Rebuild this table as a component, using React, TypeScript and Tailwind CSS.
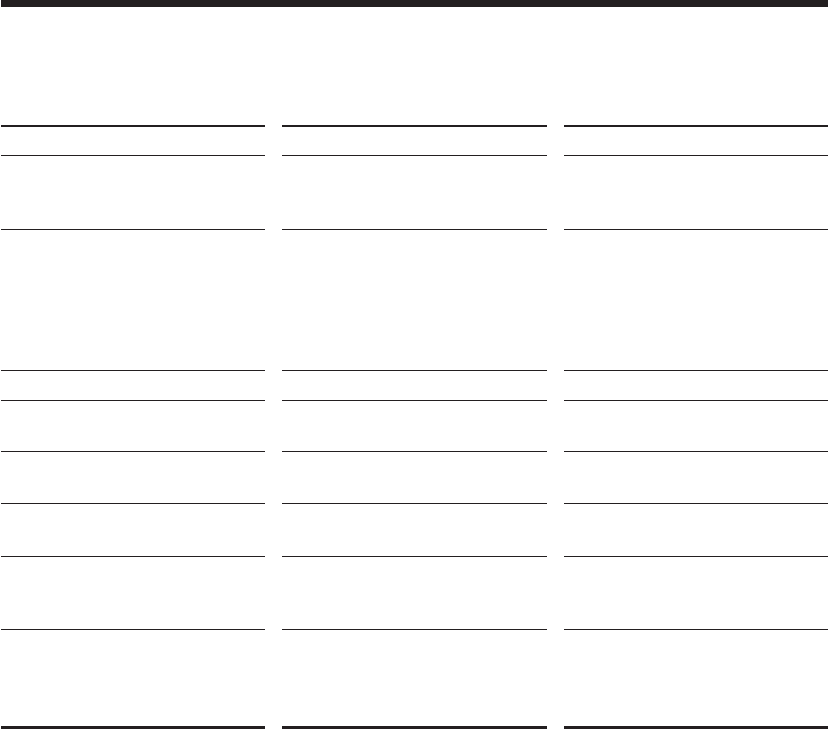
import React from "react";

// Row heights include each row's 1px bottom rule
const ROWS = [29, 74, 141, 30, 51, 52, 53, 73];
const COLUMNS = ["left", "middle", "right"];

const Column = () => (
  <div className="flex flex-col border-t-2 border-[#231f20]">
    {ROWS.map((h, i) => (
      <div
        key={`row-${i}`}
        className="border-b border-[#231f20]"
        style={{ height: h }}
      />
    ))}
    <div className="h-[99px] border-b-[3px] border-[#231f20]" />
  </div>
);

export default function App() {
  return (
    <div className="w-[829px] h-[729px] overflow-hidden bg-white px-[1px] font-['Liberation_Sans',sans-serif]">
      <div className="h-[7px] bg-[#231f20]" />
      <div className="grid grid-cols-[264px_265px_264px] gap-x-[17px] pt-[118px]">
        {COLUMNS.map((c) => (
          <Column key={c} />
        ))}
      </div>
    </div>
  );
}
